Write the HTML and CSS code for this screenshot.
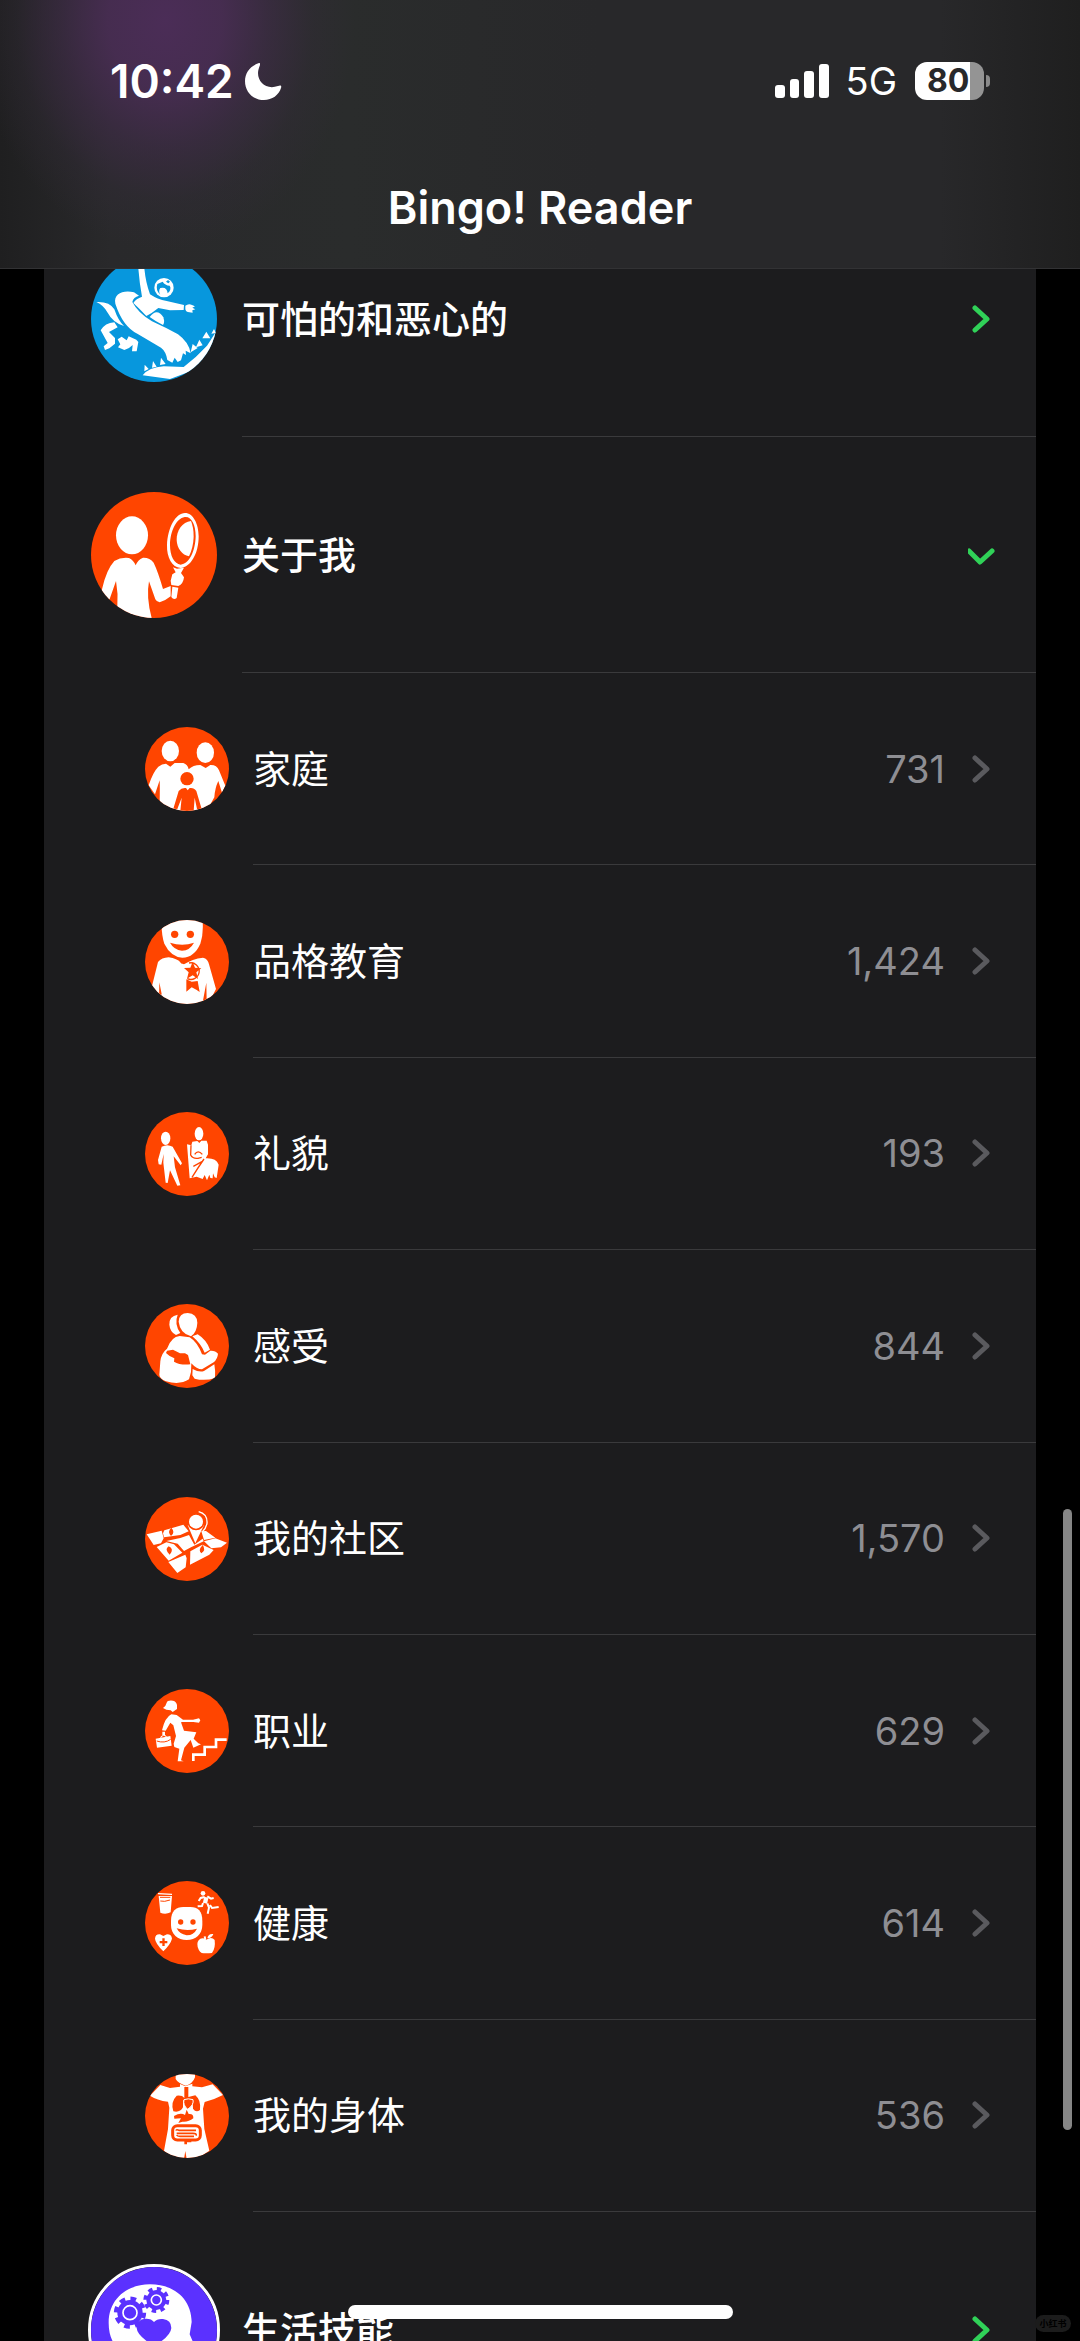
FILE: index.html
```html
<!DOCTYPE html>
<html lang="zh-CN">
<head>
<meta charset="utf-8">
<meta name="viewport" content="width=device-width, initial-scale=1">
<title>Bingo! Reader</title>
<link rel="stylesheet" href="styles.css">
</head>
<body>
<svg class="defs" aria-hidden="true">
  <symbol id="chevron" viewBox="0 0 28 28"><path d="M7 3 19 14 7 25" fill="none" stroke="currentColor" stroke-width="5" stroke-linecap="round" stroke-linejoin="round"/></symbol>
  <symbol id="chevron-down" viewBox="0 0 28 28"><path d="M1 10 12 21 24 10" fill="none" stroke="currentColor" stroke-width="5" stroke-linecap="round" stroke-linejoin="round"/></symbol>
</svg>

<header class="header">
  <div class="status">
    <div class="status-left">
      <time class="clock">10:42</time>
      <svg class="moon" viewBox="0 0 37 37" aria-label="勿扰模式"><path d="M14 0C5 3 0 10 0 18c0 11 8 19 19 19 8 0 15-5 17-12 1-3-1-3-3-2C22 27 13 20 13 10c0-3 1-5 2-8 0-2 0-2-1-2z" fill="#fff"/></svg>
    </div>
    <div class="status-right">
      <svg class="signal" viewBox="0 0 54 34" aria-label="信号"><g fill="#fff"><rect y="21" width="10" height="13" rx="3"/><rect x="15" y="15" width="9" height="19" rx="3"/><rect x="29" y="7" width="10" height="27" rx="3"/><rect x="44" width="10" height="34" rx="3"/></g></svg>
      <span class="network">5G</span>
      <span class="battery"><span class="battery-level">80</span></span>
    </div>
  </div>
  <h1 class="title">Bingo! Reader</h1>
</header>

<main class="viewport">
  <ul class="card">
    <li>
      <button type="button" class="row">
        <svg class="icon" viewBox="63 17 378 378" aria-hidden="true"><rect x="63" y="17" width="378" height="378" fill="#0797dd"/>
          <g fill="#fff"><path d="M204 40 223 54Q227 96 240 132Q262 147 290 152L342 164 341 179 300 180 265 173 245 188 229 197 208 175 190 158Q198 145 216 139Q207 90 204 40z"/>
          <circle cx="282" cy="112" r="29"/><path d="M346 166Q356 158 366 164L375 168 367 172 376 177 367 180 368 187 358 186Q348 186 346 177z"/>
          <path d="M136 160C130 130 160 118 192 126L207 136Q190 140 187 155Q204 188 246 213Q290 233 324 252Q357 276 362 309L347 301 348 314 339 309 333 330 323 335 314 322 307 337 292 329Q288 303 273 292Q236 270 202 250Q158 228 136 160z"/>
          <path d="M79 155Q119 153 133 177Q145 212 162 227Q128 216 113 187Q100 164 79 155z"/>
          <path d="M239 200Q261 171 280 201Q285 216 279 224Q258 214 239 200z"/>
          <path d="M133 216 143 231 117 245 135 263 135 280 118 294 105 299 101 288 113 278 92 240Q105 218 133 216z"/>
          <path d="M143 267 155 259 170 270 176 258 199 268 205 275 200 303 186 303 188 284 177 293 163 299 144 291 151 282z"/>
          <path d="M218 375Q236 351 281 348L341 350Q377 323 411 286L438 244 441 290 370 360 300 386z"/>
          <path d="M223 363 224 343 236 356zM246 352 249 332 260 349zM270 344 273 322 287 341zM362 306 368 281 383 293zM378 291 388 268 398 285zM397 264 409 244 421 264zM424 250 432 236 438 248z"/></g>
          <path d="M278 94Q285 105 299 106Q306 117 293 129Q291 108 271 113Q264 122 271 134Q256 119 262 101zM294 89 300 94 295 99 288 94z" fill="#0797dd"/></svg>
        <span class="body"><span class="label">可怕的和恶心的</span><svg class="chev"><use href="#chevron"/></svg></span>
      </button>
    </li>
    <li>
      <button type="button" class="row" aria-expanded="true">
        <svg class="icon" viewBox="63 725 378 378" aria-hidden="true"><rect x="63" y="725" width="378" height="378" fill="#ff4500"/>
          <g fill="#fff"><ellipse cx="186" cy="855" rx="48" ry="57"/>
          <path d="M96 1017Q109 958 133 932Q153 920 177 923Q191 930 197 945Q203 929 219 922Q239 921 251 937Q264 964 279 1016L302 1007 302 1038Q288 1050 269 1056Q260 1055 256 1047L237 993Q228 1040 245 1103L142 1103V1068Q145 1030 138 992L119 1046 80 1080z"/>
          <path fill-rule="evenodd" d="M345 788C369 788 386 820 386 858C386 910 362 951 332 953C306 952 290 921 291 885C293 832 317 788 345 788zM344 800C319 805 301 841 300 884C300 917 313 941 332 943C358 941 376 902 377 858C377 822 364 797 344 800z"/>
          <path d="M363 812C337 815 319 841 320 869C321 894 336 914 357 918Q370 891 371 859Q371 831 363 812z"/>
          <path d="M309 951 321 955 342 952 333 968 342 981Q340 1001 325 1007L304 1004 302 991 307 972 317 966zM307 1009 325 1012 320 1043Q311 1050 304 1040z"/></g></svg>
        <span class="body"><span class="label">关于我</span><svg class="chev"><use href="#chevron-down"/></svg></span>
      </button>
      <ul class="sub">
        <li><a class="row" href="#family">
          <svg class="icon" viewBox="45 51 252 252" aria-hidden="true"><rect x="45" y="51" width="252" height="252" fill="#ff4500"/>
            <g fill="#fff"><ellipse cx="121" cy="123" rx="26" ry="31"/><ellipse cx="226" cy="128" rx="26" ry="31"/>
            <path d="M56 226Q69 186 85 170Q96 161 108 161L121 170 134 159H160Q173 163 176 178Q189 165 211 165L227 174 241 165Q260 164 267 181L286 227 276 248 265 213Q255 233 253 262L230 303H100L89 272Q90 234 89 211L75 253z"/></g>
            <g fill="#ff4500"><circle cx="171" cy="206" r="20"/><path d="M130 296 146 243Q155 232 168 234L173 241 179 234Q192 232 199 243L215 297 201 297 194 263 191 303H151L155 263 142 297z"/></g></svg>
          <span class="body"><span class="label">家庭</span><span class="count">731</span><svg class="chev"><use href="#chevron"/></svg></span></a></li>
        <li><a class="row" href="#character">
          <svg class="icon" viewBox="45 628 252 252" aria-hidden="true"><rect x="45" y="628" width="252" height="252" fill="#ff4500"/>
            <g fill="#fff"><path d="M96 620H217Q222 667 211 699Q193 740 157 741Q122 738 103 699Q92 667 96 620z"/><path d="M66 826 84 754Q95 741 116 740Q142 744 151 755Q151 759 162 761Q187 744 219 741Q234 744 237 761L258 835 235 880H90z"/></g>
            <g fill="#ff4500"><circle cx="134" cy="671" r="11"/><circle cx="181" cy="671" r="11"/><path d="M120 696Q157 708 192 696Q180 719 156 720Q132 718 120 696zM88 815 95 850 87 865zM229 816 217 880 230 871z"/>
            <path d="m188 753 7 18 19 2-15 12 5 20-16-11-17 10 5-19-14-13 19-1zM169 806 185 813 203 811 209 844 199 837 185 830 169 843z"/></g>
            <path d="M177 757A25 25 0 1 1 172 804" fill="none" stroke="#ff4500" stroke-width="4"/></svg>
          <span class="body"><span class="label">品格教育</span><span class="count">1,424</span><svg class="chev"><use href="#chevron"/></svg></span></a></li>
        <li><a class="row" href="#manners">
          <svg class="icon" viewBox="45 51 252 252" aria-hidden="true"><rect x="45" y="51" width="252" height="252" fill="#ff4500"/>
            <g fill="#fff"><ellipse cx="107" cy="130" rx="14" ry="20"/><ellipse cx="207" cy="116" rx="13" ry="20"/>
            <path d="M95 155Q112 146 128 155L156 205 152 211 131 184 135 217 151 271 142 272 120 226 113 264 107 263 100 203 101 177 94 209 86 208 84 195z"/>
            <path d="M171 148 184 151 187 140 202 138 208 144 214 137H230L234 149V178L227 190Q258 188 266 209L260 249 254 247 249 235 248 250 241 249 238 239 231 256 224 240 218 252 200 245 179 250z"/></g>
            <path d="M183 151 182 180Q188 192 204 190L215 187M194 178Q204 163 217 178M222 192Q204 218 186 247M217 199 190 214" fill="none" stroke="#ff4500" stroke-width="4"/></svg>
          <span class="body"><span class="label">礼貌</span><span class="count">193</span><svg class="chev"><use href="#chevron"/></svg></span></a></li>
        <li><a class="row" href="#feelings">
          <svg class="icon" viewBox="45 628 252 252" aria-hidden="true"><rect x="45" y="628" width="252" height="252" fill="#ff4500"/>
            <g fill="#fff"><path d="M143 660Q117 664 118 690Q120 712 138 721L151 715Q132 688 143 660zM187 725 203 719Q229 735 240 765L224 774Q212 746 187 725z"/>
            <path d="M146 681Q147 655 173 655Q201 657 202 684Q201 712 183 725Q150 716 146 681z"/>
            <path d="M111 762Q124 726 149 724L179 728Q202 742 216 779L225 780 241 768Q256 767 264 777Q263 792 251 803L216 824Q200 824 184 806L183 832 177 854Q150 872 108 860Q88 851 88 840L91 800Q94 775 111 762z"/>
            <path d="M188 823Q208 834 222 829L253 809Q257 831 255 850Q225 860 194 852L187 842z"/></g>
            <path d="M111 768 129 765 150 776H165L174 781 181 809Q150 812 132 801L133 791 119 784 108 775z" fill="#ff4500"/></svg>
          <span class="body"><span class="label">感受</span><span class="count">844</span><svg class="chev"><use href="#chevron"/></svg></span></a></li>
        <li><a class="row" href="#community">
          <svg class="icon" viewBox="45 48 252 252" aria-hidden="true"><rect x="45" y="48" width="252" height="252" fill="#ff4500"/>
            <g fill="#fff"><path d="M50 160 95 149 101 172 93 187 71 192zM103 148 160 131 176 151 151 162 102 169 99 157zM80 198 109 184 132 190 157 215 116 239zM109 180 151 171 177 162 193 191 218 173 221 181 183 199 162 210 143 188zM214 151 228 150 256 170 222 177zM222 181 256 172 291 185 273 199 244 202zM181 211 217 191 251 207 238 221 180 251zM115 243 166 221 170 232 167 259 142 276z"/></g>
            <path d="M173 132 196 187 222 132z" fill="#fff"/>
            <g fill="#ff4500"><path d="M124 140Q111 151 123 165Q137 154 124 140zM116 196Q102 205 119 221Q134 204 116 196zM218 192Q203 208 214 217Q229 207 218 192z"/><circle cx="198" cy="122" r="26"/></g>
            <circle cx="198" cy="122" r="21" fill="#fff"/><path d="M206 92Q233 99 231 127Q228 143 216 154" fill="none" stroke="#fff" stroke-width="4"/></svg>
          <span class="body"><span class="label">我的社区</span><span class="count">1,570</span><svg class="chev"><use href="#chevron"/></svg></span></a></li>
        <li><a class="row" href="#careers">
          <svg class="icon" viewBox="45 627 252 252" aria-hidden="true"><rect x="45" y="627" width="252" height="252" fill="#ff4500"/>
            <g fill="#fff"><path d="M110 668Q112 660 129 662Q139 664 141 675V687L128 696 122 691Q108 691 99 684Q107 680 110 668zM124 703 140 705 159 719 189 719 207 715 211 721 207 728 190 726 157 726 153 727 162 752 199 757 191 776 205 790 213 793 190 803 182 780 163 803 153 841 161 844 143 844 148 806 133 801 131 791 138 768 130 736 121 728 107 752 96 751Q105 712 124 703zM97 755H105V766H97zM77 776 121 768 125 797 81 803z"/></g>
            <path d="M92 779 93 770Q101 763 108 768L109 774" fill="none" stroke="#fff" stroke-width="3"/><path d="M80 783Q104 791 122 778" fill="none" stroke="#ff4500" stroke-width="3"/>
            <path d="M190 843V824H224V801H258V779H290" fill="none" stroke="#fff" stroke-width="8"/></svg>
          <span class="body"><span class="label">职业</span><span class="count">629</span><svg class="chev"><use href="#chevron"/></svg></span></a></li>
        <li><a class="row" href="#health">
          <svg class="icon" viewBox="45 48 252 252" aria-hidden="true"><rect x="45" y="48" width="252" height="252" fill="#ff4500"/>
            <g fill="#fff"><path d="M123 168C123 138 138 126 160 126H181C204 126 217 138 217 168V180C217 208 197 225 170 225C143 225 123 208 123 180z"/>
            <path d="M84 84 126 86V90L84 88zM86 93H126L122 142Q106 150 91 143zM100 259Q76 235 75 221Q76 207 90 208L100 213 111 208Q125 208 126 221Q122 237 100 259zM229 224Q245 214 254 225Q257 250 246 264L237 265H222Q209 266 203 246Q199 228 211 221Q221 218 229 224zM232 220Q235 205 250 207Q245 220 232 220z"/><circle cx="219" cy="85" r="7"/></g>
            <path d="M226 224 224 214M232 94 243 101 251 99M224 96 212 99 206 108M219 114 216 123 203 124M232 115 237 128 233 146M240 120 246 129 266 126" fill="none" stroke="#fff" stroke-width="6"/><path d="M229 97 225 115" stroke="#fff" stroke-width="13"/>
            <path d="M90 97H121M91 108 104 109 120 105" fill="none" stroke="#ff4500" stroke-width="3"/>
            <g fill="#ff4500"><circle cx="152" cy="171" r="8"/><circle cx="189" cy="171" r="8"/><path d="M140 190Q171 199 201 191Q192 210 170 211Q148 207 140 190zM97 220H104V228H112V235H104V243H97V235H89V228H97z"/></g></svg>
          <span class="body"><span class="label">健康</span><span class="count">614</span><svg class="chev"><use href="#chevron"/></svg></span></a></li>
        <li><a class="row" href="#body">
          <svg class="icon" viewBox="45 625 252 252" aria-hidden="true"><rect x="45" y="625" width="252" height="252" fill="#ff4500"/>
            <g fill="#fff"><path d="M137 620H195V635Q188 655 167 660Q144 653 137 640zM60 690 91 658 120 667 150 663V655L166 662 187 654V662L216 665 248 656 279 688Q250 703 224 709L219 729 223 790 238 855 200 880H170L166 856 162 880H130L102 855 114 790 118 726 114 708Q81 704 60 690z"/></g>
            <g fill="#ff4500"><path d="M163 664H175V694L196 689Q214 704 210 733Q198 742 189 729L188 704H159V725Q150 742 130 737Q121 709 140 690Q157 688 163 697zM132 751Q152 739 165 748L170 732 176 745Q191 743 190 758Q175 770 157 768L145 772 153 758 133 759z"/></g>
            <rect x="128" y="780" width="83" height="43" rx="14" fill="none" stroke="#ff4500" stroke-width="9"/>
            <path d="M162 702Q175 697 189 702Q193 717 173 731Q158 718 162 702z" fill="#ff4500" stroke="#fff" stroke-width="3"/>
            <path d="M198 794H147Q139 790 138 795M140 803H189Q201 803 198 810M192 812H150Q142 812 140 808" fill="none" stroke="#ff4500" stroke-width="5"/><path d="M184 826H167V836" fill="none" stroke="#ff4500" stroke-width="8"/></svg>
          <span class="body"><span class="label">我的身体</span><span class="count">536</span><svg class="chev"><use href="#chevron"/></svg></span></a></li>
      </ul>
    </li>
    <li>
      <button type="button" class="row">
        <svg class="icon icon-ring" viewBox="94 142 378 378" aria-hidden="true"><rect x="90" y="140" width="386" height="386" fill="#5b31ff"/>
          <path d="M147 310C147 235 205 194 271 194C345 194 395 239 396 307L390 344 410 390 390 400 390 450H190V400Q147 370 147 310z" fill="#fff"/>
          <g fill="#5b31ff"><circle cx="211" cy="279" r="38"/><circle cx="290" cy="241" r="30"/><path d="M283 379Q232 348 231 325Q231 299 257 297Q275 296 283 307Q293 296 310 298Q335 301 335 325Q333 350 283 379z"/></g>
          <g fill="none" stroke="#5b31ff"><circle cx="211" cy="279" r="42" stroke-width="13" stroke-dasharray="17 16"/><circle cx="290" cy="241" r="33" stroke-width="12" stroke-dasharray="13 13"/></g>
          <g fill="none" stroke="#fff" stroke-width="5"><circle cx="211" cy="279" r="21"/><circle cx="290" cy="241" r="15"/></g></svg>
        <span class="body"><span class="label">生活技能</span><svg class="chev"><use href="#chevron"/></svg></span>
      </button>
    </li>
  </ul>
</main>

<div class="scrollbar"></div>
<div class="home-indicator"></div>
<span class="watermark">小红书</span>
</body>
</html>
```

FILE: styles.css
```css
* { box-sizing: border-box; }

body {
  margin: 0;
  height: 100vh;
  display: flex;
  flex-direction: column;
  overflow: hidden;
  position: relative;
  background: #000;
  color: #fff;
  font-family: Inter, "Noto Sans CJK SC", sans-serif;
}

ul { list-style: none; margin: 0; padding: 0; }

.defs { position: absolute; width: 0; height: 0; }

.header {
  flex: none;
  height: 269px;
  border-bottom: 1px solid #323234;
  background:
    radial-gradient(ellipse 190px 230px at 165px 20px, #4b2d57 0%, #492d54e6 30%, #402c49a0 55%, #352c3b50 78%, #28292b00 100%),
    linear-gradient(90deg, #1f1f20 0, #29292b 110px, #2a2c2c 350px, #28282a 600px, #28282a 940px, #1f1f1f 100%);
}

.status {
  display: flex;
  justify-content: space-between;
  align-items: center;
  padding: 52px 96px 0 110px;
  height: 110px;
}

.status-left, .status-right { display: flex; align-items: center; }
.status-left { gap: 11px; }
.clock { font-size: 46px; line-height: 60px; font-weight: 600; }
.moon { width: 37px; height: 37px; }
.signal { width: 54px; height: 34px; margin-right: 17px; }
.network { font-size: 38px; line-height: 60px; margin-right: 18px; }

.battery {
  position: relative;
  width: 69px;
  height: 38px;
  border-radius: 12px;
  background: linear-gradient(90deg, #fff 80%, #949494 80%);
}

.battery::after {
  content: "";
  position: absolute;
  left: 71px;
  top: 13px;
  width: 4px;
  height: 12px;
  border-radius: 0 4px 4px 0;
  background: #8a8a8a;
}

.battery-level {
  display: block;
  padding-left: 12px;
  font-size: 32px;
  line-height: 38px;
  font-weight: 700;
  color: #28282a;
}

.title {
  margin: 68px 0 0;
  text-align: center;
  font-size: 45px;
  line-height: 60px;
  font-weight: 600;
}

.viewport {
  flex: 1;
  min-height: 0;
  overflow: hidden;
  padding: 0 44px;
}

.card { margin-top: -68px; background: #1c1c1e; }

.row {
  display: flex;
  align-items: center;
  width: 100%;
  height: 236px;
  padding: 0 0 0 44px;
  gap: 22px;
  border: 0;
  background: none;
  color: #fff;
  font: inherit;
  font-size: 38px;
  font-weight: 500;
  text-align: left;
  text-decoration: none;
}

.icon {
  flex: none;
  width: 132px;
  height: 132px;
  border: 3px solid transparent;
  border-radius: 50%;
  overflow: hidden;
}

.icon-ring { border-color: #fff; }

.body {
  flex: 1;
  align-self: stretch;
  display: flex;
  align-items: center;
  padding-right: 40px;
  border-bottom: 1px solid #3a3a3c;
}

.label { flex: 1; line-height: 56px; }

.chev { width: 28px; height: 28px; color: #30d158; }

.sub { display: grid; grid-auto-rows: 1fr; min-height: 1539px; }

.sub .row {
  height: 100%;
  padding-left: 101px;
  gap: 24px;
  font-weight: 400;
}

.sub .icon { width: 84px; height: 84px; border: 0; }
.sub .chev { color: #5a5a5e; }
.count { margin-right: 23px; color: #8e8e93; }

.scrollbar {
  position: absolute;
  right: 8px;
  bottom: 211px;
  width: 9px;
  height: 621px;
  border-radius: 5px;
  background: #868686;
}

.home-indicator {
  position: absolute;
  left: 50%;
  bottom: 22px;
  width: 385px;
  height: 14px;
  margin-left: -192px;
  border-radius: 7px;
  background: #fff;
}

.watermark {
  position: absolute;
  right: 9px;
  bottom: 9px;
  width: 36px;
  border-radius: 9px;
  background: #1c1c1c;
  color: #000;
  font-size: 9px;
  line-height: 17px;
  font-weight: 700;
  text-align: center;
}
```
